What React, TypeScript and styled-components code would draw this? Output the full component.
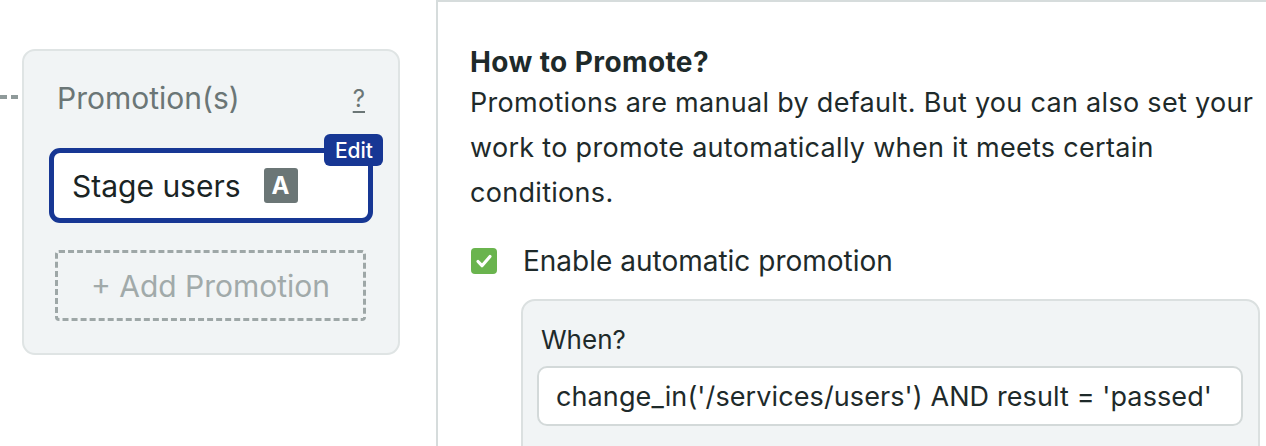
import React from 'react';
import styled, { createGlobalStyle } from 'styled-components';

const GlobalStyle = createGlobalStyle`
  html, body {
    margin: 0;
    padding: 0;
    background: #ffffff;
  }
  body {
    font-family: Inter, "Noto Sans", sans-serif;
    color: #1e2a2a;
  }
`;

const Page = styled.div`
  display: flex;
  width: 1266px;
  height: 446px;
  overflow: hidden;
`;

const LeftColumn = styled.div`
  width: 436px;
  flex-shrink: 0;
  display: flex;
  align-items: flex-start;
  padding-top: 49px;
  box-sizing: border-box;
`;

const Connector = styled.div`
  width: 22px;
  height: 4px;
  margin-top: 46px;
  background: repeating-linear-gradient(
    to right,
    #8f9a9a 0,
    #8f9a9a 7px,
    transparent 7px,
    transparent 11px
  );
`;

const Card = styled.div`
  width: 378px;
  box-sizing: border-box;
  background: #f1f4f5;
  border: 2px solid #dfe4e4;
  border-radius: 13px;
  padding: 29px 25px 32px 25px;
  display: flex;
  flex-direction: column;
`;

const CardHeader = styled.div`
  display: flex;
  justify-content: space-between;
  align-items: center;
  padding: 0 8px 0 8px;
  height: 36px;
`;

const CardTitle = styled.span`
  font-size: 30px;
  color: #6b7676;
`;

const HelpLink = styled.span`
  font-size: 24px;
  color: #6b7676;
  text-decoration: underline;
  text-underline-offset: 4px;
`;

const PromotionBox = styled.div`
  position: relative;
  margin-top: 32px;
  height: 75px;
  box-sizing: border-box;
  border: 5px solid #173794;
  border-radius: 11px;
  background: #ffffff;
  display: flex;
  align-items: center;
  gap: 23px;
  padding-left: 18px;
`;

const PromotionName = styled.span`
  font-size: 30px;
  color: #1a2424;
`;

const AutoBadge = styled.span`
  width: 34px;
  height: 35px;
  border-radius: 3px;
  background: #6b7676;
  color: #ffffff;
  font-size: 24px;
  font-weight: 700;
  display: flex;
  align-items: center;
  justify-content: center;
`;

const EditTag = styled.span`
  position: absolute;
  top: -19px;
  right: -15px;
  height: 32px;
  padding: 0 10px 0 11px;
  border-radius: 6px;
  background: #173794;
  color: #ffffff;
  font-size: 21px;
  font-weight: 500;
  display: flex;
  align-items: center;
`;

const AddButton = styled.div`
  margin: 27px 7px 0 6px;
  height: 71px;
  box-sizing: border-box;
  border: 3px dashed #9ea7a7;
  border-radius: 4px;
  display: flex;
  align-items: center;
  justify-content: center;
  font-size: 30px;
  color: #a1aaaa;
`;

const RightPanel = styled.div`
  flex: 1;
  border-left: 2px solid #d6dcdc;
  border-top: 2px solid #d6dcdc;
  padding: 42px 0 0 32px;
  box-sizing: border-box;
`;

const Heading = styled.div`
  font-size: 28px;
  font-weight: 700;
  line-height: 36px;
  letter-spacing: 0.4px;
`;

const Paragraph = styled.p`
  margin: 0;
  font-size: 27px;
  line-height: 45px;
  letter-spacing: 0.3px;
  max-width: 795px;
`;

const CheckRow = styled.label`
  display: flex;
  align-items: center;
  gap: 26px;
  height: 30px;
  margin-top: 31px;
  font-size: 28px;
  padding-left: 1px;
`;

const CheckBox = styled.span`
  width: 26px;
  height: 26px;
  flex-shrink: 0;
  border-radius: 4px;
  background: #6ab44e;
  display: flex;
  align-items: center;
  justify-content: center;
`;

const ConditionBox = styled.div`
  margin: 23px 0 0 51px;
  width: 739px;
  box-sizing: border-box;
  background: #f1f4f5;
  border: 2px solid #dbe0e0;
  border-radius: 14px;
  padding: 23px 15px 40px 14px;
`;

const FieldLabel = styled.div`
  font-size: 26px;
  line-height: 32px;
  padding-left: 4px;
`;

const ConditionInput = styled.div`
  margin-top: 10px;
  height: 60px;
  box-sizing: border-box;
  background: #ffffff;
  border: 2px solid #d3d9d9;
  border-radius: 10px;
  display: flex;
  align-items: center;
  padding-left: 17px;
  font-size: 27px;
  letter-spacing: 0.1px;
  white-space: nowrap;
`;

export default function App() {
  return (
    <>
      <GlobalStyle />
      <Page>
        <LeftColumn>
          <Connector />
          <Card>
            <CardHeader>
              <CardTitle>Promotion(s)</CardTitle>
              <HelpLink>?</HelpLink>
            </CardHeader>
            <PromotionBox>
              <PromotionName>Stage users</PromotionName>
              <AutoBadge>A</AutoBadge>
              <EditTag>Edit</EditTag>
            </PromotionBox>
            <AddButton>+ Add Promotion</AddButton>
          </Card>
        </LeftColumn>
        <RightPanel>
          <Heading>How to Promote?</Heading>
          <Paragraph>
            Promotions are manual by default. But you can also set your work to promote
            automatically when it meets certain conditions.
          </Paragraph>
          <CheckRow>
            <CheckBox>
              <svg width="20" height="20" viewBox="0 0 20 20" fill="none">
                <path d="M4 10.5l4 4.2L16 5.5" stroke="#ffffff" strokeWidth="3.2" strokeLinecap="round" strokeLinejoin="round" />
              </svg>
            </CheckBox>
            Enable automatic promotion
          </CheckRow>
          <ConditionBox>
            <FieldLabel>When?</FieldLabel>
            <ConditionInput>change_in('/services/users') AND result = 'passed'</ConditionInput>
          </ConditionBox>
        </RightPanel>
      </Page>
    </>
  );
}
